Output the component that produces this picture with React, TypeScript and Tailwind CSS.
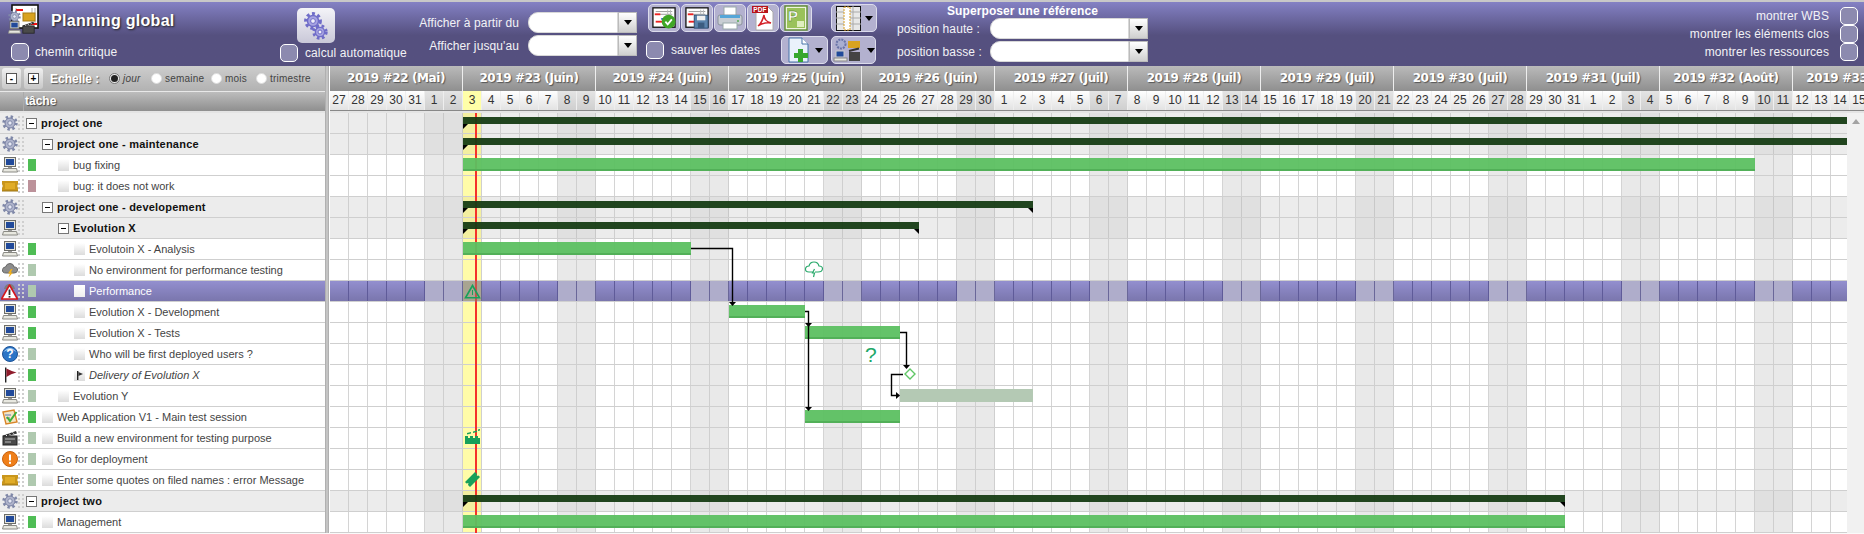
import React from 'react';

const LEFT_FONT = "font-['Liberation_Sans',Arial,sans-serif]";

/* ---------- small drawn icons ---------- */
const Gear = ({ size = 16 }: { size?: number }) => (
  <svg width={size} height={size} viewBox="0 0 16 16">
    <circle cx="8" cy="8" r="6.4" fill="none" stroke="#7f88a8" strokeWidth="2.6" strokeDasharray="2.4 2.6" />
    <circle cx="8" cy="8" r="5" fill="#b0b5cc" stroke="#747ca0" />
    <circle cx="8" cy="8" r="2.2" fill="#e6e8f4" stroke="#7f88a8" />
  </svg>
);

const Computer = () => (
  <svg width="16" height="16" viewBox="0 0 16 16">
    <rect x="2.5" y="0.5" width="11" height="9" fill="#e4e4dc" stroke="#6d6d68" />
    <rect x="4" y="2" width="8" height="6" fill="#214a9a" />
    <rect x="6" y="10" width="4" height="1" fill="#999" />
    <path d="M1.5 11.5 H14.5 L15.5 15 H0.5 Z" fill="#e8e8e0" stroke="#8a8a84" />
  </svg>
);

const Ticket = () => (
  <svg width="16" height="16" viewBox="0 0 16 16">
    <path d="M0 3 H16 V6 Q14.5 8 16 10 V13 H0 V10 Q1.5 8 0 6 Z" fill="#c9961c" />
    <rect x="3" y="5" width="10" height="6" fill="#e0ac28" />
    <path d="M0 13 H16" stroke="#9a7414" />
  </svg>
);

const Cloud = () => (
  <svg width="16" height="16" viewBox="0 0 16 16">
    <path d="M4 11 Q0 11 0.5 7.5 Q1 5 3.5 5 Q4.5 1.5 8 1.5 Q11.5 1.5 12 5 Q16 5 15.5 8.5 Q15 11 12 11 Z" fill="#8d8d8d" stroke="#666" />
    <path d="M9 7 L6 11.5 H8 L6.5 15.5 L11 10.5 H8.8 L10.5 7 Z" fill="#f3b21c" />
  </svg>
);

const Warning = () => (
  <svg width="17" height="17" viewBox="0 0 17 17">
    <path d="M3 6 Q4 1 8.5 1 Q13 1 14 6 Z" fill="#7d7d7d" />
    <path d="M8.5 2 L16.5 16 H0.5 Z" fill="#fff" stroke="#d3171c" strokeWidth="1.6" strokeLinejoin="round" />
    <rect x="7.6" y="6.5" width="1.8" height="5.5" fill="#333" />
    <rect x="7.6" y="13" width="1.8" height="1.6" fill="#333" />
  </svg>
);

const Question = () => (
  <svg width="16" height="16" viewBox="0 0 16 16">
    <circle cx="8" cy="8" r="7.5" fill="#2a74c6" stroke="#1c5296" />
    <path d="M1.5 6 Q8 1 14.5 6 Q8 -2 1.5 6" fill="#a6cdf2" />
    <text x="8" y="12.3" textAnchor="middle" fontSize="12" fontWeight="700" fill="#fff" fontFamily="Liberation Sans">?</text>
  </svg>
);

const RedFlag = () => (
  <svg width="16" height="16" viewBox="0 0 16 16">
    <rect x="3" y="0.5" width="1.4" height="15" fill="#222" />
    <path d="M4.4 1.5 Q8 3.5 14.5 5.5 Q9 6.5 4.4 10 Z" fill="#8f1c2c" />
  </svg>
);

const TestSession = () => (
  <svg width="16" height="16" viewBox="0 0 16 16">
    <path d="M1 3 L12 1 L15 13 L4 15 Z" fill="#f4e5c4" stroke="#d98528" strokeWidth="1.4" />
    <path d="M3 6 H9 M4 9 H8" stroke="#5a78b8" />
    <path d="M5 8 L8 12 L14.5 3" fill="none" stroke="#3fae3a" strokeWidth="2" />
  </svg>
);

const Clapper = () => (
  <svg width="16" height="16" viewBox="0 0 16 16">
    <rect x="1" y="6" width="14" height="9" fill="#4a4a4a" stroke="#222" />
    <path d="M1 5.5 L14 1 L15 3.5 L2 7 Z" fill="#333" />
    <path d="M3.5 4.5 L5 6 M7 3.5 L8.5 5 M10.5 2.3 L12 3.8" stroke="#eee" />
    <path d="M3 9 H13 M3 12 H9" stroke="#bbb" />
  </svg>
);

const Alert = () => (
  <svg width="16" height="16" viewBox="0 0 16 16">
    <circle cx="8" cy="8" r="7.5" fill="#ef7f1a" stroke="#c9620e" />
    <rect x="7" y="3.5" width="2" height="6" fill="#fff" />
    <rect x="7" y="10.8" width="2" height="2" fill="#fff" />
  </svg>
);

const GanttSheet = () => (
  <g>
    <rect x="1" y="1" width="24" height="21" fill="#fff" stroke="#111" strokeWidth="1.4" />
    <path d="M4 5 H22 M4 8 H22" stroke="#999" />
    <path d="M17 3 V21 M20 3 V21" stroke="#bbb" />
    <rect x="3" y="7" width="6" height="2" fill="#e22" />
    <rect x="10" y="12" width="5" height="2" fill="#36c" />
    <rect x="4" y="15" width="8" height="2" fill="#e22" />
  </g>
);

const Logo = () => (
  <svg width="32" height="30" viewBox="0 0 32 30" className="shrink-0">
    <g transform="translate(5 1)">
      <rect x="0" y="0" width="26" height="23" fill="#fff" stroke="#111" strokeWidth="1.6" />
      <path d="M4 3 V20 M20 3 V20 M23 3 V20" stroke="#aaa" />
      <rect x="4" y="4" width="7" height="2" fill="#e11" />
      <rect x="19" y="18" width="6" height="2" fill="#e11" />
    </g>
    <g transform="translate(1 6)">
      <Gear size={13} />
    </g>
    <rect x="16" y="9" width="12" height="8" fill="#d9a31f" stroke="#a87d14" />
    <g transform="translate(1 17)">
      <svg width="13" height="13" viewBox="0 0 16 16"><rect x="2.5" y="0.5" width="11" height="9" fill="#e4e4dc" stroke="#6d6d68" /><rect x="4" y="2" width="8" height="6" fill="#214a9a" /><path d="M1.5 11.5 H14.5 L15.5 15 H0.5 Z" fill="#e8e8e0" stroke="#8a8a84" /></svg>
    </g>
    <g transform="translate(15 17)">
      <svg width="13" height="13" viewBox="0 0 16 16"><rect x="1" y="6" width="14" height="9" fill="#4a4a4a" stroke="#222" /><path d="M1 5.5 L14 1 L15 3.5 L2 7 Z" fill="#333" /><path d="M3.5 4.5 L5 6 M7 3.5 L8.5 5 M10.5 2.3 L12 3.8" stroke="#eee" /></svg>
    </g>
  </svg>
);

const CalcGears = () => (
  <svg width="26" height="28" viewBox="0 0 26 28">
    <circle cx="10" cy="9" r="7.4" fill="none" stroke="#6f6cc8" strokeWidth="3" strokeDasharray="3 2.6" />
    <circle cx="10" cy="9" r="5.5" fill="#a7a4e2" stroke="#6f6cc8" strokeWidth="1.4" />
    <circle cx="10" cy="9" r="2.4" fill="#f0f0fa" stroke="#6f6cc8" />
    <circle cx="17" cy="20" r="6.2" fill="none" stroke="#6f6cc8" strokeWidth="3" strokeDasharray="2.6 2.4" />
    <circle cx="17" cy="20" r="4.6" fill="#a7a4e2" stroke="#6f6cc8" strokeWidth="1.4" />
    <circle cx="17" cy="20" r="2" fill="#f0f0fa" stroke="#6f6cc8" />
  </svg>
);

const CalCheck = () => (
  <svg width="24" height="24" viewBox="0 0 26 24">
    <GanttSheet />
    <circle cx="18" cy="16" r="7.5" fill="#3fa625" />
    <path d="M14.5 16 L17 18.8 L21.5 13.5" fill="none" stroke="#fff" strokeWidth="2" />
  </svg>
);

const CalSave = () => (
  <svg width="24" height="24" viewBox="0 0 26 24">
    <GanttSheet />
    <rect x="10" y="9" width="15" height="14" fill="#5b84ad" stroke="#2d4d73" />
    <rect x="13" y="9.5" width="9" height="5" fill="#f0f0f0" />
    <rect x="14" y="17" width="7" height="6" fill="#3b5c80" />
  </svg>
);

const Printer = () => (
  <svg width="26" height="24" viewBox="0 0 26 24">
    <rect x="7" y="1" width="12" height="9" fill="#fff" stroke="#9aa" />
    <rect x="1" y="9" width="24" height="10" rx="2" fill="#c9ced4" stroke="#8b939c" />
    <rect x="3" y="9" width="20" height="3" fill="#56a6d8" />
    <rect x="6" y="17" width="14" height="6" fill="#fff" stroke="#9aa" />
    <circle cx="21" cy="15" r="1" fill="#5a5" />
  </svg>
);

const Pdf = () => (
  <svg width="24" height="26" viewBox="0 0 24 26">
    <path d="M5 2 H17 L22 7 V25 H5 Z" fill="#fff" stroke="#aaa" />
    <rect x="1" y="1" width="16" height="7" fill="#b7131a" />
    <text x="9" y="7" textAnchor="middle" fontSize="6.5" fontWeight="700" fill="#fff" fontFamily="Liberation Sans">PDF</text>
    <path d="M7 21 Q11 18 13 10 Q13 16 20 18 Q13 17 7 21" fill="none" stroke="#d32027" strokeWidth="1.5" />
  </svg>
);

const MsProject = () => (
  <svg width="24" height="26" viewBox="0 0 24 26">
    <rect x="1" y="1" width="22" height="24" fill="#eef3df" stroke="#5d8a2f" strokeWidth="1.4" />
    <rect x="3" y="3" width="18" height="20" fill="#9ac25a" />
    <text x="9" y="16" textAnchor="middle" fontSize="15" fontWeight="700" fill="#fff" stroke="#3e6e1a" strokeWidth="0.4" fontFamily="Liberation Sans">P</text>
    <rect x="13" y="16" width="7" height="6" fill="#dfeec0" />
  </svg>
);

const Columns = () => (
  <svg width="25" height="25" viewBox="0 0 25 25">
    <rect x="0.5" y="0.5" width="24" height="24" fill="#e8e8e8" stroke="#111" />
    <path d="M0 6 H25 M0 12 H25 M0 18 H25 M17 0 V25" stroke="#aaa" />
    <rect x="8" y="1" width="6" height="23" fill="#fff" stroke="#d69a1e" strokeDasharray="2 1" />
  </svg>
);

const NewDoc = () => (
  <svg width="24" height="26" viewBox="0 0 24 26">
    <path d="M2 1 H15 L21 7 V25 H2 Z" fill="#eaf2fb" stroke="#4673a8" />
    <path d="M15 1 V7 H21" fill="#fff" stroke="#4673a8" />
    <path d="M11 12 H16 V16 H21 V21 H16 V25 H11 V21 H7 V16 H11 Z" fill="#37a82e" />
  </svg>
);

const ItemTypes = () => (
  <svg width="30" height="24" viewBox="0 0 30 24">
    <circle cx="8" cy="6" r="4.5" fill="#a9aed0" stroke="#6a74a8" strokeWidth="2" strokeDasharray="2 1" />
    <rect x="15" y="3" width="12" height="7" fill="#d9a31f" />
    <rect x="3" y="13" width="8" height="6" fill="#214a9a" stroke="#ccc" />
    <rect x="1" y="20" width="13" height="3" fill="#e8e8e0" stroke="#888" />
    <rect x="16" y="14" width="11" height="9" fill="#444" />
    <path d="M16 13 L26 10.5" stroke="#333" strokeWidth="2" />
  </svg>
);

const Caret = () => <span className="w-0 h-0 border-x-[4px] border-x-transparent border-t-[5px] border-t-black" />;

/* ---------- toolbar parts ---------- */
const CheckBox = ({ className = '' }: { className?: string }) => (
  <span className={`block w-[18px] h-[18px] shrink-0 rounded-[5px] border border-white bg-[#8c8aaf] ${className}`} />
);

const Combo = ({ width }: { width: string }) => (
  <div className="flex h-[21px]">
    <div className={`${width} bg-white rounded-l-[10px] border border-[#d8d8d8]`} />
    <div className="w-[19px] flex items-center justify-center bg-gradient-to-b from-white to-[#cfcfcf] border border-[#bbb]">
      <Caret />
    </div>
  </div>
);

const ToolButton = ({ children }: { children: React.ReactNode }) => (
  <div className="w-[32px] h-[28px] flex items-center justify-center rounded-[5px] border border-[#dcdcec] bg-[#b3b1cf]">
    {children}
  </div>
);

const MenuButton = ({ children, width }: { children: React.ReactNode; width: string }) => (
  <div className={`${width} h-[28px] flex items-center justify-center gap-[4px] rounded-[5px] border border-[#dcdcec] bg-[#b3b1cf]`}>
    {children}
    <Caret />
  </div>
);

const Toolbar = () => (
  <div className="h-[64px] flex shrink-0 text-[#f2f2f6] text-[12px] tracking-[0.1px] bg-gradient-to-b from-[#8481c4] via-[#55507f] via-[52%] to-[#55507f]">
    <div className="w-[280px] pl-[7px] pt-[2px]">
      <div className="flex items-start h-[39px]">
        <Logo />
        <span className="ml-[12px] mt-[5px] text-[16px] tracking-[0.3px] font-bold text-white [text-shadow:1px_1px_2px_#222]">Planning global</span>
      </div>
      <div className="flex items-center gap-[6px] pl-[4px]">
        <CheckBox />
        <span>chemin critique</span>
      </div>
    </div>

    <div className="w-[137px] pt-[6px]">
      <div className="ml-[17px] w-[38px] h-[35px] flex items-center justify-center rounded-[5px] bg-gradient-to-b from-[#f4f4f8] to-[#c9c8d8]">
        <CalcGears />
      </div>
      <div className="flex items-center gap-[7px] mt-[1px]">
        <CheckBox />
        <span>calcul automatique</span>
      </div>
    </div>

    <div className="w-[220px] pt-[10px] flex flex-col gap-[2px]">
      <div className="flex items-center justify-end gap-[9px]">
        <span>Afficher à partir du</span>
        <Combo width="w-[90px]" />
      </div>
      <div className="flex items-center justify-end gap-[9px]">
        <span>Afficher jusqu'au</span>
        <Combo width="w-[90px]" />
      </div>
    </div>

    <div className="w-[194px] pl-[9px] pt-[2px]">
      <div className="flex gap-[1px] pl-[2px]">
        <ToolButton><CalCheck /></ToolButton>
        <ToolButton><CalSave /></ToolButton>
        <ToolButton><Printer /></ToolButton>
        <ToolButton><Pdf /></ToolButton>
        <ToolButton><MsProject /></ToolButton>
      </div>
      <div className="flex items-center mt-[4px]">
        <CheckBox />
        <span className="ml-[7px] w-[110px]">sauver les dates</span>
        <MenuButton width="w-[47px]"><NewDoc /></MenuButton>
      </div>
    </div>

    <div className="w-[46px] pt-[2px] flex flex-col gap-[4px]">
      <MenuButton width="w-[46px]"><Columns /></MenuButton>
      <MenuButton width="w-[45px]"><ItemTypes /></MenuButton>
    </div>

    <div className="w-[271px] pl-[20px]">
      <div className="h-[16px] leading-[16px] pt-[1px] text-center font-bold text-white">Superposer une référence</div>
      <div className="flex items-center gap-[9px]">
        <span className="w-[84px] whitespace-nowrap">position haute :</span>
        <Combo width="w-[139px]" />
      </div>
      <div className="flex items-center gap-[9px] mt-[2px]">
        <span className="w-[84px] whitespace-nowrap">position basse :</span>
        <Combo width="w-[139px]" />
      </div>
    </div>

    <div className="flex-1 pt-[5px] pr-[6px] flex flex-col items-end">
      {['montrer WBS', 'montrer les éléments clos', 'montrer les ressources'].map((label) => (
        <div key={label} className="flex items-center h-[18px] gap-[11px]">
          <span>{label}</span>
          <CheckBox />
        </div>
      ))}
    </div>
  </div>
);

/* ---------- left task list ---------- */
type Task = {
  name: string;
  icon: React.ReactNode;
  level: number;
  group?: boolean;
  color?: string;
  selected?: boolean;
  italic?: boolean;
  flag?: boolean;
};

const GREEN = 'bg-[#4fbd55]';
const PALE = 'bg-[#afc9af]';

const tasks: Task[] = [
  { name: 'project one', icon: <Gear />, level: 0, group: true },
  { name: 'project one - maintenance', icon: <Gear />, level: 1, group: true },
  { name: 'bug fixing', icon: <Computer />, level: 2, color: GREEN },
  { name: 'bug: it does not work', icon: <Ticket />, level: 2, color: 'bg-[#bc929a]' },
  { name: 'project one - developement', icon: <Gear />, level: 1, group: true },
  { name: 'Evolution X', icon: <Computer />, level: 2, group: true },
  { name: 'Evolutoin X - Analysis', icon: <Computer />, level: 3, color: GREEN },
  { name: 'No environment for performance testing', icon: <Cloud />, level: 3, color: PALE },
  { name: 'Performance', icon: <Warning />, level: 3, color: PALE, selected: true },
  { name: 'Evolution X - Development', icon: <Computer />, level: 3, color: GREEN },
  { name: 'Evolution X - Tests', icon: <Computer />, level: 3, color: GREEN },
  { name: 'Who will be first deployed users ?', icon: <Question />, level: 3, color: PALE },
  { name: 'Delivery of Evolution X', icon: <RedFlag />, level: 3, color: GREEN, italic: true, flag: true },
  { name: 'Evolution Y', icon: <Computer />, level: 2, color: PALE },
  { name: 'Web Application V1 - Main test session', icon: <TestSession />, level: 1, color: GREEN },
  { name: 'Build a new environment for testing purpose', icon: <Clapper />, level: 1, color: PALE },
  { name: 'Go for deployment', icon: <Alert />, level: 1, color: PALE },
  { name: 'Enter some quotes on filed names : error Message', icon: <Ticket />, level: 1, color: PALE },
  { name: 'project two', icon: <Gear />, level: 0, group: true },
  { name: 'Management', icon: <Computer />, level: 1, color: GREEN },
];

const groupIndent = ['w-[2px]', 'w-[18px]', 'w-[34px]'];
const taskIndent = ['w-0', 'w-[6px]', 'w-[22px]', 'w-[38px]'];

const Dots = () => (
  <svg width="6" height="15" viewBox="0 0 6 15" className="shrink-0">
    {[0, 4, 8, 12].map((y) => (
      <g key={y} fill="#cfcfcf">
        <rect x="0" y={y} width="2" height="2" />
        <rect x="4" y={y} width="2" height="2" />
      </g>
    ))}
  </svg>
);

const MinusBox = () => (
  <span className="w-[11px] h-[11px] shrink-0 flex items-center justify-center border border-[#777] bg-white">
    <span className="w-[5px] h-[1px] bg-black" />
  </span>
);

const Tile = ({ flag, selected }: { flag?: boolean; selected?: boolean }) => (
  <span className={`w-[11px] h-[12px] shrink-0 flex items-center justify-center bg-gradient-to-b ${selected ? 'from-white to-[#eee]' : 'from-white to-[#dcdcdc]'}`}>
    {flag && (
      <svg width="7" height="9" viewBox="0 0 7 9">
        <rect x="1" y="0" width="1.4" height="9" fill="#222" />
        <path d="M2.4 1 L7 3 L2.4 5 Z" fill="#333" />
      </svg>
    )}
  </span>
);

const TaskRow = ({ task }: { task: Task }) => {
  const rowColor = task.selected
    ? 'bg-gradient-to-b from-[#938fcf] to-[#7a76ad] text-white'
    : task.group
      ? 'bg-[#ececec] text-[#111] font-bold tracking-[0.22px]'
      : 'bg-white text-[#444]';
  return (
    <div className={`h-[21px] flex items-center border-b border-[#cfcfcf] pl-[1px] ${rowColor}`}>
      <span className="w-[17px] h-[17px] shrink-0 flex items-center justify-center">{task.icon}</span>
      <Dots />
      {task.group ? (
        <>
          <span className={`${groupIndent[task.level]} shrink-0`} />
          <MinusBox />
          <span className="ml-[4px] whitespace-nowrap">{task.name}</span>
        </>
      ) : (
        <>
          <span className={`ml-[4px] w-[8px] h-[12px] shrink-0 ${task.color}`} />
          <span className={`${taskIndent[task.level]} shrink-0`} />
          <Tile flag={task.flag} selected={task.selected} />
          <span className={`ml-[4px] whitespace-nowrap ${task.italic ? 'italic' : ''}`}>{task.name}</span>
        </>
      )}
    </div>
  );
};

const Radio = ({ label, on, width }: { label: string; on?: boolean; width: string }) => (
  <span className={`flex items-center gap-[3px] ${width}`}>
    <span className={`w-[11px] h-[11px] shrink-0 rounded-full flex items-center justify-center ${on ? 'bg-[#eee] border border-[#777]' : 'bg-white border border-[#ddd]'}`}>
      {on && <span className="w-[7px] h-[7px] rounded-full bg-[#222]" />}
    </span>
    <span className={`text-[10px] tracking-[0.2px] text-[#444] ${on ? 'italic' : ''}`}>{label}</span>
  </span>
);

const SquareButton = ({ children }: { children: React.ReactNode }) => (
  <span className="w-[19px] h-[21px] rounded-[3px] bg-gradient-to-b from-[#f0f0f0] to-[#c8c8c8] flex items-center justify-center">
    <span className="w-[11px] h-[11px] border border-[#555] bg-white flex items-center justify-center text-[10px] leading-none font-bold text-black">{children}</span>
  </span>
);

const LeftPanel = () => (
  <div className="w-[325px] shrink-0">
    <div className="h-[25px] flex items-center pl-[2px] bg-gradient-to-b from-[#cdcdcd] to-[#b2b2b2]">
      <SquareButton>-</SquareButton>
      <span className="w-[3px]" />
      <SquareButton>+</SquareButton>
      <span className="ml-[7px] w-[59px] text-[12px] font-bold text-white [text-shadow:1px_1px_1px_#555]">Echelle :</span>
      <span className="flex">
        <Radio label="jour" on width="w-[42px]" />
        <Radio label="semaine" width="w-[60px]" />
        <Radio label="mois" width="w-[45px]" />
        <Radio label="trimestre" width="w-[54px]" />
      </span>
    </div>
    <div className="h-[20px] flex bg-gradient-to-b from-[#bdbdbd] to-[#8f8f8f] border-t border-[#e8e8e8]">
      <span className="w-[24px] border-r border-[#aaa]" />
      <span className="pl-[1px] text-[12px] leading-[19px] font-bold text-white [text-shadow:1px_1px_1px_#444]">tâche</span>
    </div>
    <div className="h-[2px] bg-[#e4e4e4]" />
    {tasks.map((t) => (
      <TaskRow key={t.name} task={t} />
    ))}
  </div>
);

/* ---------- timeline ---------- */
const DAY = 19;
const DAYS: number[] = [
  27, 28, 29, 30, 31,
  ...Array.from({ length: 30 }, (_, i) => i + 1),
  ...Array.from({ length: 31 }, (_, i) => i + 1),
  ...Array.from({ length: 15 }, (_, i) => i + 1),
];
const WEEKS = ['2019 #22 (Mai)', '2019 #23 (Juin)', '2019 #24 (Juin)', '2019 #25 (Juin)', '2019 #26 (Juin)', '2019 #27 (Juil)', '2019 #28 (Juil)', '2019 #29 (Juil)', '2019 #30 (Juil)', '2019 #31 (Juil)', '2019 #32 (Août)', '2019 #33 (Août)'];
const TODAY = 7;

type Bar = { row: number; from: number; to: number; kind: 'summary' | 'task' | 'pale'; tip?: boolean };

// x in page pixels, row index in the task list
const bars: Bar[] = [
  { row: 0, from: 463, to: 1847, kind: 'summary' },
  { row: 1, from: 463, to: 1847, kind: 'summary' },
  { row: 2, from: 463, to: 1755, kind: 'task' },
  { row: 4, from: 463, to: 1033, kind: 'summary', tip: true },
  { row: 5, from: 463, to: 919, kind: 'summary', tip: true },
  { row: 6, from: 463, to: 691, kind: 'task' },
  { row: 9, from: 729, to: 805, kind: 'task' },
  { row: 10, from: 805, to: 900, kind: 'task' },
  { row: 13, from: 900, to: 1033, kind: 'pale' },
  { row: 14, from: 805, to: 900, kind: 'task' },
  { row: 18, from: 463, to: 1565, kind: 'summary', tip: true },
  { row: 19, from: 463, to: 1565, kind: 'task' },
];

const TimeBar = ({ bar }: { bar: Bar }) => {
  const style = { left: bar.from - 330, width: bar.to - bar.from };
  if (bar.kind === 'summary') {
    return (
      <div className="absolute top-[4px] h-[7px] bg-[#163c14]/95" style={style}>
        <span className="absolute left-0 top-[7px] w-0 h-0 border-t-[5px] border-t-black border-r-[5px] border-r-transparent" />
        {bar.tip && <span className="absolute right-0 top-[7px] w-0 h-0 border-t-[5px] border-t-black border-l-[5px] border-l-transparent" />}
      </div>
    );
  }
  return (
    <div
      className={`absolute top-[3px] h-[13px] ${bar.kind === 'task' ? 'bg-[#5cc061]/95 border-b-2 border-[#52b058]' : 'bg-[#b4c9b4]'}`}
      style={style}
    />
  );
};

const cellClass = (day: number, task: Task) => {
  const weekend = day % 7 === 5 || day % 7 === 6;
  if (task.selected) {
    if (day === TODAY) return 'bg-[#a8a491] border-[#6d6a90]';
    return weekend ? 'bg-[#afadcb] border-[#6a6799]' : 'border-[#5f5b99]';
  }
  if (day === TODAY) return task.group ? 'bg-[#f3efa0] border-[#cfcfcf]' : 'bg-[#fffca8] border-[#cfcfcf]';
  if (task.group) return weekend ? 'bg-[#e0e0e0] border-[#c8c8c8]' : 'bg-[#ececec] border-[#cfcfcf]';
  return weekend ? 'bg-[#e9e9e9] border-[#cfcfcf]' : 'bg-white border-[#d4d4d4]';
};

const TimeRow = ({ task, index }: { task: Task; index: number }) => (
  <div className={`relative h-[21px] flex border-b ${task.selected ? 'bg-gradient-to-b from-[#938fcf] to-[#7a76ad] border-[#d0d0d0]' : 'border-[#cfcfcf]'}`}>
    {DAYS.map((d, i) => (
      <div key={i} className={`w-[19px] shrink-0 border-r ${cellClass(i, task)}`} />
    ))}
    {/* today marker, runs through the row border so the line stays solid */}
    <div className={`absolute left-[145px] top-0 -bottom-[1px] w-[2px] ${task.selected ? 'bg-[#c9504a]' : 'bg-[#f5322a]'}`} />
    {bars.filter((b) => b.row === index).map((b) => (
      <TimeBar key={`${b.row}-${b.from}`} bar={b} />
    ))}
    {index === 7 && (
      <svg className="absolute left-[474px] top-[1px]" width="20" height="17" viewBox="0 0 20 17" fill="none" stroke="#2aaa6c" strokeWidth="1.2">
        <path d="M9 11 H5 Q1 11 1.5 7.5 Q2 5 5 5 Q6 1 10 1 Q14 1 15 5 Q18.5 5 18.5 8 Q18 11 14 11 H11 M10.5 8 L8.5 12 H10.5 L9.5 16" />
      </svg>
    )}
    {index === 8 && (
      <svg className="absolute left-[134px] top-[3px]" width="17" height="15" viewBox="0 0 17 15" fill="none" stroke="#17a05a" strokeWidth="1.6">
        <path d="M8.5 1.5 L15.5 13.8 H1.5 Z" />
        <path d="M8.5 6 V11" strokeWidth="1" />
      </svg>
    )}
    {index === 11 && (
      <span className="absolute left-[535px] top-[0px] text-[21px] leading-[21px] text-[#20a868]">?</span>
    )}
    {index === 12 && (
      <svg className="absolute left-[574px] top-[3px]" width="12" height="12" viewBox="0 0 12 12" fill="none" stroke="#5fc765" strokeWidth="1.4">
        <path d="M6 1 L11 6 L6 11 L1 6 Z" />
      </svg>
    )}
    {index === 15 && (
      <svg className="absolute left-[134px] top-[0px]" width="17" height="17" viewBox="0 0 17 17" fill="#17a05a">
        <rect x="1" y="10" width="15" height="6" />
        <path d="M1 8 H4 V10 H1 Z M6 8 H9 V10 H6 Z M11 8 H14 V10 H11 Z M3 5 L7 4 V5.5 L3 6.5 Z M9 3.5 L13 2.5 V4 L9 5 Z M14 1.5 L16 1 V2.5 L14 3 Z" />
      </svg>
    )}
    {index === 17 && (
      <svg className="absolute left-[134px] top-[1px]" width="17" height="17" viewBox="0 0 17 17" fill="#17a05a">
        <path d="M1 11 L11 1 L13 3 L12.5 5 L14.5 4.5 L16 6 L6 16 L4 14 L4.5 12 L2.5 12.5 Z" />
      </svg>
    )}
  </div>
);

const Links = () => (
  <svg className="absolute left-0 top-0 pointer-events-none" width="1517" height="420" viewBox="330 113 1517 420" fill="none" stroke="#000" strokeWidth="1.4">
    <path d="M691 248.5 H732.5 V302" />
    <path d="M805 311.5 H808.5 V407" />
    <path d="M900 332.5 H906.5 V365" />
    <path d="M903 374.5 H891.5 V395.5 H897" />
    <g fill="#000" stroke="none">
      <path d="M729 302 H736 L732.5 306 Z" />
      <path d="M805 323 H812 L808.5 327 Z" />
      <path d="M805 407 H812 L808.5 411 Z" />
      <path d="M903 365 H910 L906.5 369 Z" />
      <path d="M896 392 V399 L900 395.5 Z" />
    </g>
  </svg>
);

const TimeHeader = () => (
  <div className="overflow-hidden">
    <div className="h-[25px] flex bg-gradient-to-b from-[#bababa] to-[#8f8f8f]">
      {WEEKS.map((w) => (
        <div key={w} className="w-[133px] shrink-0 border-r border-[#eee] text-center text-[12px] leading-[25px] font-bold text-white whitespace-nowrap [text-shadow:1px_1px_1px_#555] font-['DejaVu_Sans',sans-serif] tracking-[-0.4px]">
          {w}
        </div>
      ))}
    </div>
    <div className="h-[20px] flex border-b border-[#888]">
      {DAYS.map((d, i) => {
        const weekend = i % 7 === 5 || i % 7 === 6;
        const bg = i === TODAY ? 'bg-[#ffffa8]' : weekend ? 'bg-gradient-to-b from-[#e4e4e4] to-[#cfcfcf]' : 'bg-gradient-to-b from-white to-[#e2e2e2]';
        return (
          <div key={i} className={`shrink-0 text-center text-[12px] leading-[19px] text-[#333] border-r border-[#eee] ${bg}`} style={{ width: DAY }}>
            {d}
          </div>
        );
      })}
    </div>
    <div className="h-[2px] bg-[#e4e4e4]" />
  </div>
);

export default function App() {
  return (
    <div className={`w-[1864px] h-[534px] overflow-hidden bg-[#fafafa] text-[11px] ${LEFT_FONT}`}>
      <div className="h-[2px] bg-[#c8c8c8]" />
      <Toolbar />
      <div className="flex">
        <LeftPanel />
        <div className="w-[5px] shrink-0 bg-white flex flex-col items-start">
          <div className="w-[4px] flex-1 bg-[#c4c4c4] border-x border-[#b0b0b0]" />
        </div>
        <div className="flex-1 min-w-0">
          <TimeHeader />
          <div className="flex">
            <div className="relative w-[1517px] overflow-hidden">
              {tasks.map((t, i) => (
                <TimeRow key={t.name} task={t} index={i} />
              ))}
              <Links />
            </div>
            <div className="flex-1 bg-[#f1f1f1] flex flex-col items-center pt-[6px]">
              <span className="w-0 h-0 border-x-[4px] border-x-transparent border-b-[5px] border-b-[#a3a3a3]" />
            </div>
          </div>
        </div>
      </div>
    </div>
  );
}
